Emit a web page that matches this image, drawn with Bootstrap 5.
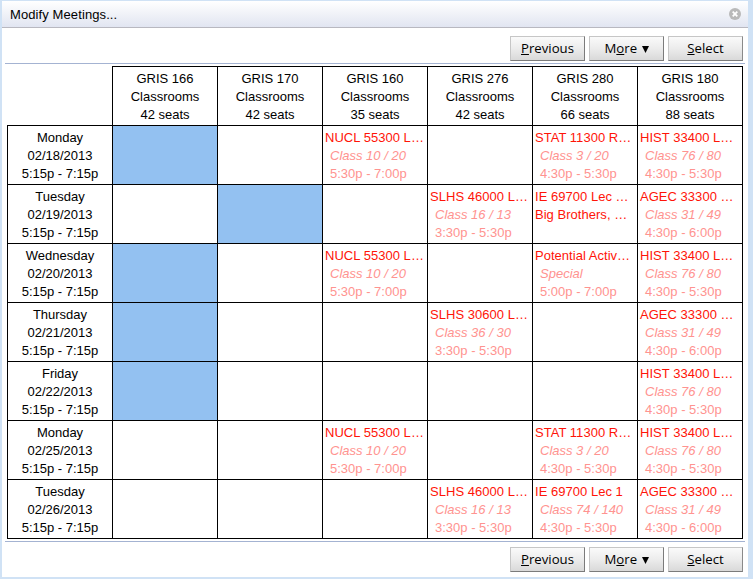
<!DOCTYPE html>
<html lang="en">
<head>
<meta charset="utf-8">
<title>Modify Meetings...</title>
<meta name="viewport" content="width=device-width, initial-scale=1">
<link href="https://cdn.jsdelivr.net/npm/bootstrap@5.3.0/dist/css/bootstrap.min.css" rel="stylesheet">
<style>
body{background:#d0e2f5;font:13px/18px "Liberation Sans",Arial,sans-serif;color:#000;height:579px;padding:1px 5px 2px 2px;overflow:hidden}
.dialog-caption{height:27px;padding:0 7px 0 8px;background:linear-gradient(#fff,#e1e5f1);border-bottom:1px solid #b8b8c0;flex:none}
.dialog-title{letter-spacing:.1px;padding-top:2px}
.tools{height:35px;padding:8px 5px 0 0;gap:4px;flex:none}
.tools-bottom{padding-top:5px}
.rule{height:1px;background:#a4b3d2;margin:0 3px;flex:none}
.btn-tool{width:75px;height:25px;padding:0;border-radius:0;border:1px solid;border-color:#c6c6c6 #7b7b7b #7b7b7b #c6c6c6;background:linear-gradient(#fafafa,#ececec 50%,#d9d9d9);font:13.2px/23px "Open Sans","Noto Sans",sans-serif;color:#000}
.btn-tool:last-child{border-right-color:#8a8a8a}
.btn-tool svg{margin:1px 0 0 1px}
.grid-table{table-layout:fixed;width:736px;margin:2px 0 2px 5px;border-collapse:separate;border-spacing:0}
.grid-table th,.grid-table td{height:59px;padding:3px 0 1px;border:0 solid #000;border-width:0 1px 1px 0;vertical-align:top;font-weight:400;white-space:nowrap;overflow:hidden}
.grid-table thead th{height:60px}
.grid-table thead th+th{border-top-width:1px}
.grid-table tbody th{border-left-width:1px}
.grid-table td{padding-left:2px}
.grid-table .free{background:#93c1f1}
.ev{color:#ff1408;letter-spacing:.03px}
.sub{color:#ff9390;padding-left:5px}
</style>
</head>
<body>
<main class="bg-white h-100 d-flex flex-column">
<header class="dialog-caption d-flex justify-content-between align-items-center">
<span class="dialog-title">Modify Meetings...</span>
<svg width="12" height="12" viewBox="0 0 12 12" role="img" aria-label="Close"><circle cx="6" cy="6" r="6" fill="#b9b9b9"/><path d="M3.7 3.7l4.6 4.6M8.3 3.7L3.7 8.3" stroke="#fff" stroke-width="1.8"/></svg>
</header>
<div class="tools d-flex justify-content-end">
<button class="btn btn-tool"><u>P</u>revious</button>
<button class="btn btn-tool">M<u>o</u>re <svg width="7" height="8" viewBox="0 0 7 8"><path d="M0 0h7L3.5 7z"/></svg></button>
<button class="btn btn-tool"><u>S</u>elect</button>
</div>
<div class="rule"></div>
<table class="grid-table">
<colgroup><col style="width:106px"><col><col><col><col><col><col></colgroup>
<thead class="text-center"><tr><th></th><th>GRIS 166<br>Classrooms<br>42 seats</th><th>GRIS 170<br>Classrooms<br>42 seats</th><th>GRIS 160<br>Classrooms<br>35 seats</th><th>GRIS 276<br>Classrooms<br>42 seats</th><th>GRIS 280<br>Classrooms<br>66 seats</th><th>GRIS 180<br>Classrooms<br>88 seats</th></tr></thead>
<tbody>
<tr><th class="text-center">Monday<br>02/18/2013<br>5:15p - 7:15p</th><td class="free"></td><td></td>
<td><div class="ev">NUCL 55300 L…</div><div class="sub"><i>Class 10 / 20</i><br>5:30p - 7:00p</div></td><td></td>
<td><div class="ev">STAT 11300 R…</div><div class="sub"><i>Class 3 / 20</i><br>4:30p - 5:30p</div></td>
<td><div class="ev">HIST 33400 L…</div><div class="sub"><i>Class 76 / 80</i><br>4:30p - 5:30p</div></td></tr>
<tr><th class="text-center">Tuesday<br>02/19/2013<br>5:15p - 7:15p</th><td></td><td class="free"></td><td></td>
<td><div class="ev">SLHS 46000 L…</div><div class="sub"><i>Class 16 / 13</i><br>3:30p - 5:30p</div></td>
<td><div class="ev">IE 69700 Lec …</div><div class="ev">Big Brothers, …</div></td>
<td><div class="ev">AGEC 33300 …</div><div class="sub"><i>Class 31 / 49</i><br>4:30p - 6:00p</div></td></tr>
<tr><th class="text-center">Wednesday<br>02/20/2013<br>5:15p - 7:15p</th><td class="free"></td><td></td>
<td><div class="ev">NUCL 55300 L…</div><div class="sub"><i>Class 10 / 20</i><br>5:30p - 7:00p</div></td><td></td>
<td><div class="ev">Potential Activ…</div><div class="sub"><i>Special</i><br>5:00p - 7:00p</div></td>
<td><div class="ev">HIST 33400 L…</div><div class="sub"><i>Class 76 / 80</i><br>4:30p - 5:30p</div></td></tr>
<tr><th class="text-center">Thursday<br>02/21/2013<br>5:15p - 7:15p</th><td class="free"></td><td></td><td></td>
<td><div class="ev">SLHS 30600 L…</div><div class="sub"><i>Class 36 / 30</i><br>3:30p - 5:30p</div></td><td></td>
<td><div class="ev">AGEC 33300 …</div><div class="sub"><i>Class 31 / 49</i><br>4:30p - 6:00p</div></td></tr>
<tr><th class="text-center">Friday<br>02/22/2013<br>5:15p - 7:15p</th><td class="free"></td><td></td><td></td><td></td><td></td>
<td><div class="ev">HIST 33400 L…</div><div class="sub"><i>Class 76 / 80</i><br>4:30p - 5:30p</div></td></tr>
<tr><th class="text-center">Monday<br>02/25/2013<br>5:15p - 7:15p</th><td></td><td></td>
<td><div class="ev">NUCL 55300 L…</div><div class="sub"><i>Class 10 / 20</i><br>5:30p - 7:00p</div></td><td></td>
<td><div class="ev">STAT 11300 R…</div><div class="sub"><i>Class 3 / 20</i><br>4:30p - 5:30p</div></td>
<td><div class="ev">HIST 33400 L…</div><div class="sub"><i>Class 76 / 80</i><br>4:30p - 5:30p</div></td></tr>
<tr><th class="text-center">Tuesday<br>02/26/2013<br>5:15p - 7:15p</th><td></td><td></td><td></td>
<td><div class="ev">SLHS 46000 L…</div><div class="sub"><i>Class 16 / 13</i><br>3:30p - 5:30p</div></td>
<td><div class="ev">IE 69700 Lec 1</div><div class="sub"><i>Class 74 / 140</i><br>4:30p - 5:30p</div></td>
<td><div class="ev">AGEC 33300 …</div><div class="sub"><i>Class 31 / 49</i><br>4:30p - 6:00p</div></td></tr>
</tbody>
</table>
<div class="rule"></div>
<div class="tools tools-bottom d-flex justify-content-end align-items-start">
<button class="btn btn-tool"><u>P</u>revious</button>
<button class="btn btn-tool">M<u>o</u>re <svg width="7" height="8" viewBox="0 0 7 8"><path d="M0 0h7L3.5 7z"/></svg></button>
<button class="btn btn-tool"><u>S</u>elect</button>
</div>
</main>
<script src="https://cdn.jsdelivr.net/npm/bootstrap@5.3.0/dist/js/bootstrap.bundle.min.js"></script>
</body>
</html>
